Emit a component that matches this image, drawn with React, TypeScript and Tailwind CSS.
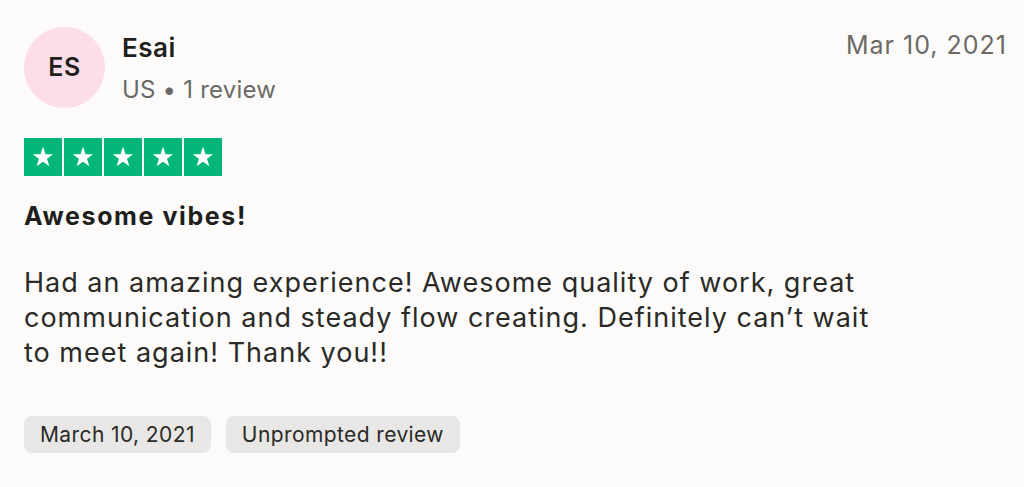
const STAR_COUNT = 5;

function StarBox() {
  return (
    <div className="flex h-[38px] w-[38px] items-center justify-center bg-[#00b67a]">
      <svg viewBox="0 0 24 24" className="h-[26px] w-[26px]" fill="#ffffff">
        <path d="M12 2.5l2.35 6.95h7.15l-5.8 4.25 2.2 6.9L12 16.4l-5.9 4.2 2.2-6.9-5.8-4.25h7.15z" />
      </svg>
    </div>
  );
}

export default function App() {
  return (
    <main
      className="min-h-[487px] bg-[#fcfbfa] pl-6 pr-[17px] pt-[27px] text-[#1f1f1c]"
      style={{ fontFamily: "Inter, 'Liberation Sans', sans-serif" }}
    >
      <div className="flex items-start justify-between">
        <div className="flex items-center gap-[17px]">
          <div className="flex h-[81px] w-[81px] items-center justify-center rounded-full bg-[#fcdde8] text-[25px] font-semibold tracking-[0.5px]">
            ES
          </div>
          <div className="flex flex-col">
            <span className="text-[26px] font-semibold leading-[34px] tracking-[0.5px]">Esai</span>
            <span className="mt-[10px] text-[24px] leading-[30px] tracking-[0.2px] text-[#6b6a66]">
              US • 1 review
            </span>
          </div>
        </div>
        <span className="mt-[3px] text-[25px] leading-[30px] tracking-[1px] text-[#6b6a66]">
          Mar 10, 2021
        </span>
      </div>

      <div className="mt-[30px] flex gap-[2px]">
        {Array.from({ length: STAR_COUNT }).map((_, index) => (
          <StarBox key={index} />
        ))}
      </div>

      <h2 className="mt-[24px] text-[25px] font-bold leading-[32px] tracking-[1.6px]">
        Awesome vibes!
      </h2>

      <p className="mt-[33px] max-w-[870px] text-[27px] leading-[35px] tracking-[1px] text-[#2a2a27]">
        Had an amazing experience! Awesome quality of work, great communication and
        steady flow creating. Definitely can’t wait to meet again! Thank you!!
      </p>

      <div className="mt-[46px] flex gap-[15px]">
        <span className="rounded-lg bg-[#e8e7e5] px-4 py-[5px] text-[21px] leading-[27px] tracking-[0.4px] text-[#2a2a27]">
          March 10, 2021
        </span>
        <span className="rounded-lg bg-[#e8e7e5] px-4 py-[5px] text-[21px] leading-[27px] tracking-[0.4px] text-[#2a2a27]">
          Unprompted review
        </span>
      </div>
    </main>
  );
}
